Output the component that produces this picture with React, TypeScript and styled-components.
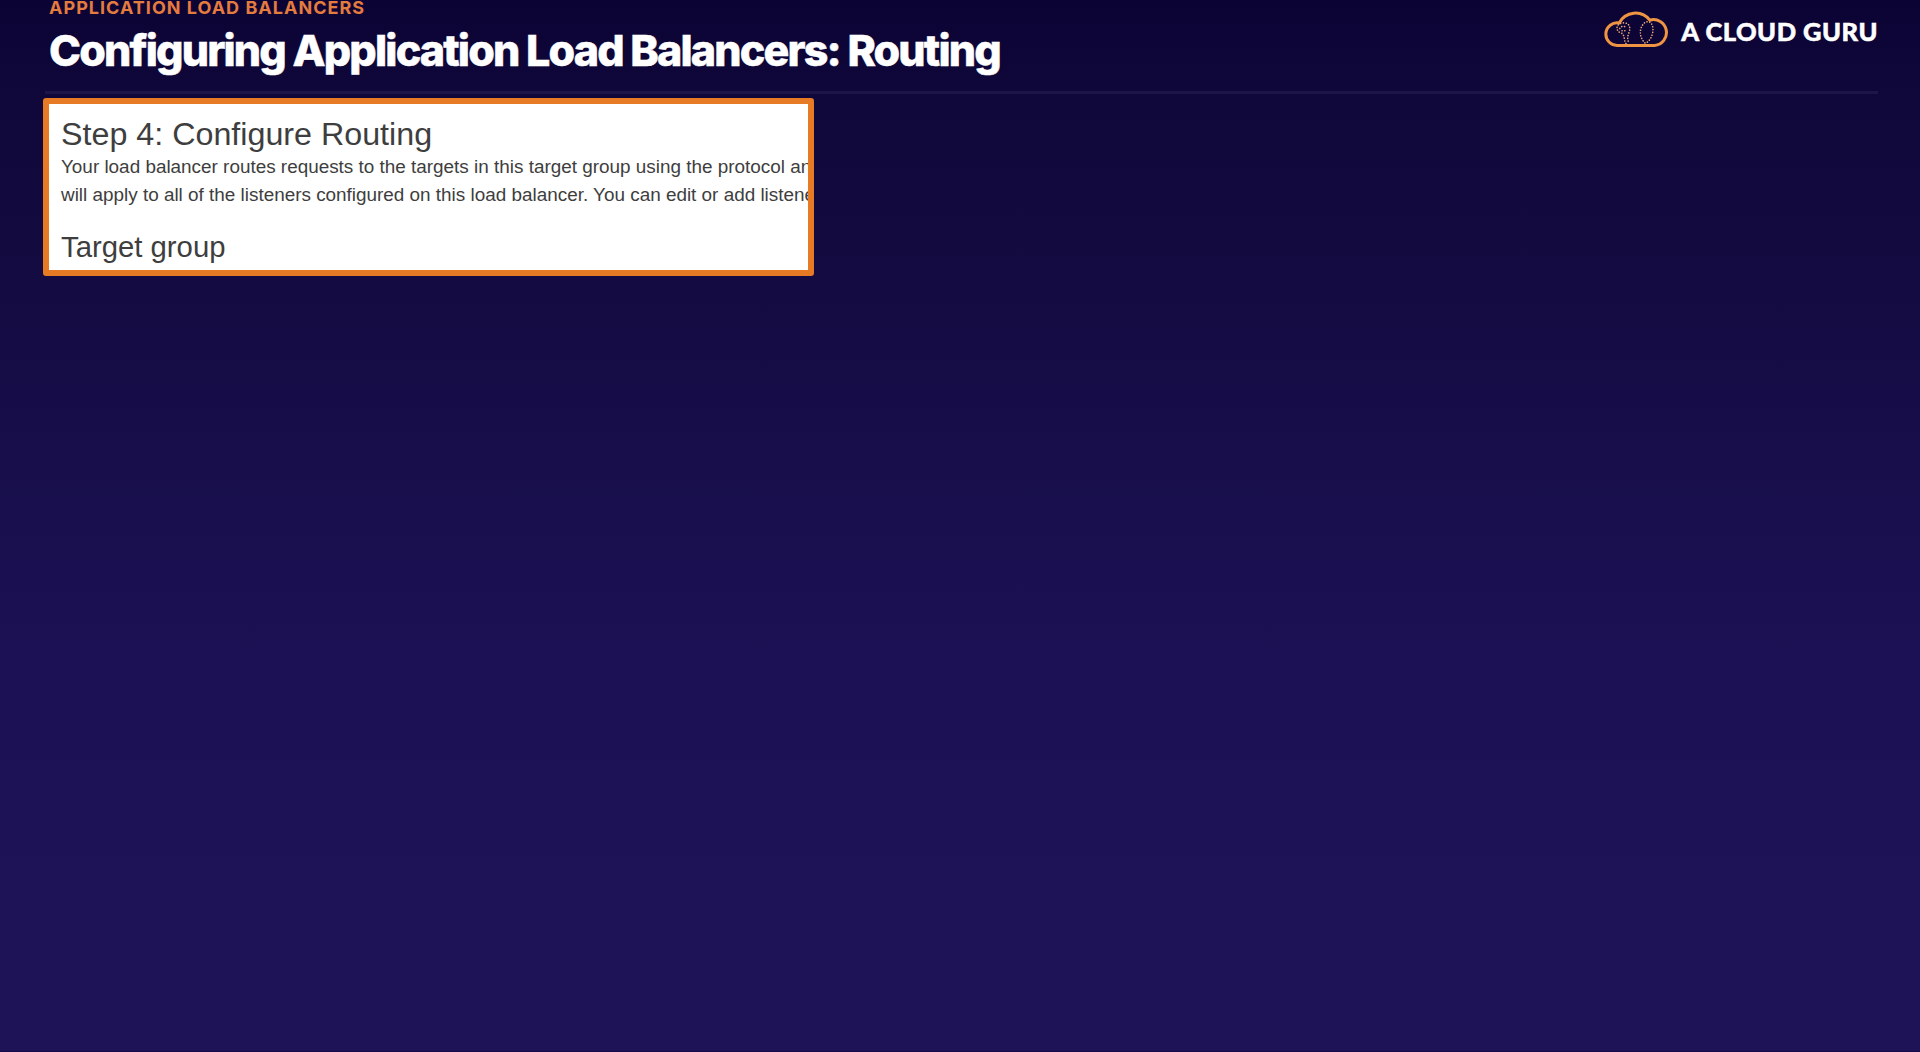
import React from "react";
import styled, { createGlobalStyle } from "styled-components";

const GlobalStyle = createGlobalStyle`
  body {
    margin: 0;
    background: #1e1357;
  }
`;

const Slide = styled.div`
  box-sizing: border-box;
  height: 1052px;
  overflow: hidden;
  display: flex;
  flex-direction: column;
  align-items: stretch;
  border-bottom: 1px solid #150a4c;
  background: linear-gradient(
    180deg,
    #0c0335 0%,
    #10083a 10%,
    #140b42 28%,
    #170e4b 44%,
    #1a1051 55%,
    #1c1155 70%,
    #1e1357 88%,
    #1e1357 100%
  );
`;

const Header = styled.header`
  box-sizing: border-box;
  height: 91px;
  flex: none;
  display: flex;
  justify-content: space-between;
  align-items: flex-start;
  padding: 0 42px 0 49px;
`;

const Titles = styled.div`
  display: flex;
  flex-direction: column;
  font-family: Inter, "Liberation Sans", sans-serif;
  white-space: nowrap;
`;

const Eyebrow = styled.div`
  height: 25px;
  margin-top: -5px;
  line-height: 25px;
  font-size: 18px;
  font-weight: 700;
  letter-spacing: 1.02px;
  color: #e47b3f;
`;

const Title = styled.h1`
  margin: 4px 0 0;
  line-height: 52px;
  font-size: 43px;
  font-weight: 800;
  letter-spacing: -1.84px;
  color: #ffffff;
  -webkit-text-stroke: 0.5px #ffffff;
`;

const Brand = styled.div`
  display: flex;
  align-items: flex-start;
  padding-top: 8px;
`;

const BrandName = styled.span`
  margin: 6px 0 0 11px;
  line-height: 34px;
  font-family: Lato, "Open Sans", sans-serif;
  font-size: 25.5px;
  font-weight: 900;
  letter-spacing: 0.5px;
  white-space: nowrap;
  color: #ffffff;
  -webkit-text-stroke: 0.5px #ffffff;
`;

const Divider = styled.hr`
  flex: none;
  width: 1833px;
  height: 3px;
  margin: 0 0 0 45px;
  border: 0;
  background: #1d1447;
`;

const Panel = styled.section`
  box-sizing: border-box;
  flex: none;
  width: 771px;
  height: 178px;
  margin: 4px 0 0 43px;
  padding: 11px 0 0 12px;
  overflow: hidden;
  border: 6px solid #e67a25;
  border-radius: 3px;
  background: #ffffff;
  background-clip: padding-box;
  font-family: "Liberation Sans", Arial, sans-serif;
  white-space: nowrap;
  color: #3e3e3e;
`;

const StepHeading = styled.h2`
  margin: 0;
  line-height: 39px;
  font-size: 32.25px;
  font-weight: 400;
`;

const Description = styled.p`
  margin: -1px 0 0;
  line-height: 28px;
  font-size: 18.9px;
`;

const GroupHeading = styled.h3<{ $gap: number }>`
  margin: ${(p) => p.$gap}px 0 0;
  line-height: 34px;
  font-size: 29.3px;
  font-weight: 400;
`;

const CloudLogo = () => (
  <svg width="66" height="40" viewBox="0 0 66 40" fill="none">
    <path
      d="M13.7 37.4A11.3 11.3 0 1 1 15.2 15A18.2 18.2 0 0 1 45.8 12.2A12.9 12.9 0 1 1 50.6 37.4Z"
      stroke="#ee9443"
      strokeWidth="3"
      strokeLinejoin="round"
    />
    <g stroke="#f0a878" strokeWidth="1.6" strokeLinecap="round" strokeDasharray="0.1 2.7">
      <path d="M22 35.5C20 33 20.8 29 18.5 25.5C15 24.8 12.8 22.5 13 19.5C13.5 15.5 18 14.5 21.5 15C26 16 26.5 20.5 25 24.5C23.5 28 23 32 25.5 35.3" />
      <path d="M15.8 20.5C17 17.8 20 17.8 22.5 19.5M18 22.8L22 22.8" />
      <path d="M41 35C37 31 35.5 26 36.8 21C38 16.5 41 13.6 44 13.7C48 14 49.5 19 48.8 24C48 29 45.5 33 42 35" />
    </g>
  </svg>
);

export default function App() {
  return (
    <>
      <GlobalStyle />
      <Slide>
        <Header>
          <Titles>
            <Eyebrow>APPLICATION LOAD BALANCERS</Eyebrow>
            <Title>Configuring Application Load Balancers: Routing</Title>
          </Titles>
          <Brand>
            <CloudLogo />
            <BrandName>A CLOUD GURU</BrandName>
          </Brand>
        </Header>
        <Divider />
        <Panel>
          <StepHeading>Step 4: Configure Routing</StepHeading>
          <Description>
            Your load balancer routes requests to the targets in this target group using the protocol an
            <br />
            will apply to all of the listeners configured on this load balancer. You can edit or add listene
          </Description>
          <GroupHeading $gap={21}>Target group</GroupHeading>
        </Panel>
      </Slide>
    </>
  );
}
